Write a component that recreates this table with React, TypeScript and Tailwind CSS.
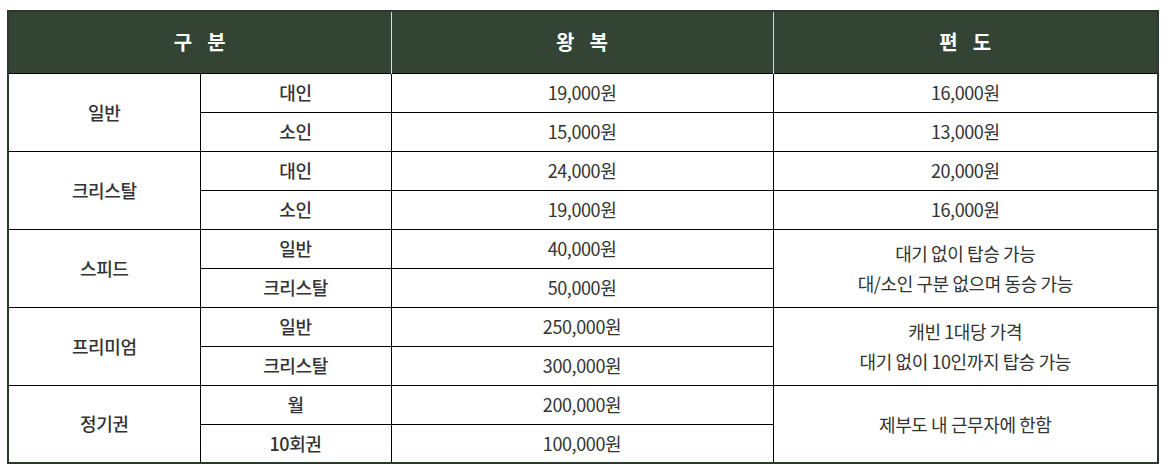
const groups = [
  {
    name: '일반',
    rows: [
      { sub: '대인', round: '19,000원', one: '16,000원' },
      { sub: '소인', round: '15,000원', one: '13,000원' },
    ],
  },
  {
    name: '크리스탈',
    rows: [
      { sub: '대인', round: '24,000원', one: '20,000원' },
      { sub: '소인', round: '19,000원', one: '16,000원' },
    ],
  },
  {
    name: '스피드',
    rows: [
      { sub: '일반', round: '40,000원' },
      { sub: '크리스탈', round: '50,000원' },
    ],
    note: ['대기 없이 탑승 가능', '대/소인 구분 없으며 동승 가능'],
  },
  {
    name: '프리미엄',
    rows: [
      { sub: '일반', round: '250,000원' },
      { sub: '크리스탈', round: '300,000원' },
    ],
    note: ['캐빈 1대당 가격', '대기 없이 10인까지 탑승 가능'],
  },
  {
    name: '정기권',
    rows: [
      { sub: '월', round: '200,000원' },
      { sub: '10회권', round: '100,000원' },
    ],
    note: ['제부도 내 근무자에 한함'],
  },
]

function HeadLabel({ a, b }: { a: string; b: string }) {
  return (
    <span className="inline-flex gap-[15px]">
      <span>{a}</span>
      <span>{b}</span>
    </span>
  )
}

export default function App() {
  return (
    <div
      className="bg-white w-[1165px] h-[465px] pt-[10px] pl-[7px]"
      style={{ fontFamily: '"Noto Sans CJK KR", "Noto Sans", sans-serif' }}
    >
      <table className="table-fixed border-collapse w-[1150px] border-2 border-[#2c3a2c] text-[18px] tracking-[-0.4px] text-[#333]">
        <colgroup>
          <col className="w-[192px]" />
          <col className="w-[191px]" />
          <col className="w-[382px]" />
          <col className="w-[385px]" />
        </colgroup>
        <thead>
          <tr className="h-[62px] bg-[#334434] text-white text-[20px] font-bold tracking-normal">
            <th colSpan={2} className="border-r border-[#d8d8d8]">
              <HeadLabel a="구" b="분" />
            </th>
            <th className="border-r border-[#d8d8d8]">
              <HeadLabel a="왕" b="복" />
            </th>
            <th>
              <HeadLabel a="편" b="도" />
            </th>
          </tr>
        </thead>
        <tbody>
          {groups.map((g) =>
            g.rows.map((r, i) => (
              <tr key={g.name + i} className="h-[39px]">
                {i === 0 && (
                  <td rowSpan={2} className="border border-black text-center font-medium">
                    {g.name}
                  </td>
                )}
                <td className="border border-black text-center font-medium">{r.sub}</td>
                <td className="border border-black text-center">{r.round}</td>
                {g.note ? (
                  i === 0 && (
                    <td rowSpan={2} className="border border-black text-center leading-[30px]">
                      {g.note.map((n) => (
                        <div key={n}>{n}</div>
                      ))}
                    </td>
                  )
                ) : (
                  <td className="border border-black text-center">{r.one}</td>
                )}
              </tr>
            ))
          )}
        </tbody>
      </table>
    </div>
  )
}
